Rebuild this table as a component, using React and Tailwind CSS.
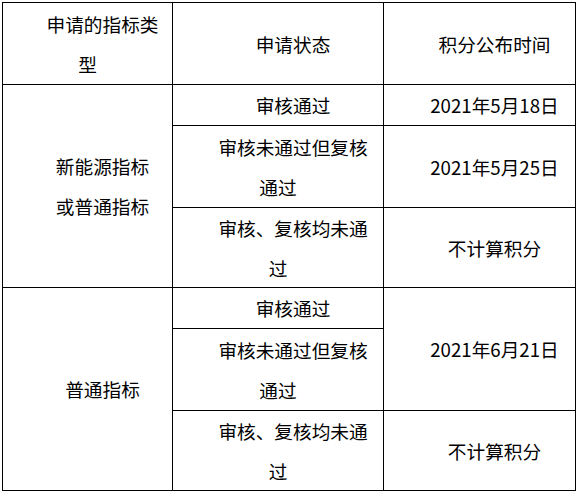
import React from "react";

const font = { fontFamily: '"Noto Sans CJK SC", "Noto Sans", sans-serif' };

function Cell({ lines, className = "", allIndent = false }) {
  return (
    <div
      className={`bg-white flex flex-col items-center justify-center text-black text-[18.67px] leading-[40px] ${className}`}
    >
      {lines.map((l, i) => (
        <div key={i} className={i === 0 || allIndent ? "pl-[30px] whitespace-nowrap" : "whitespace-nowrap"}>
          {l}
        </div>
      ))}
    </div>
  );
}

export default function App() {
  return (
    <div className="w-[580px] h-[493px] bg-white pt-[2px] pl-[2px]" style={font}>
      <div className="inline-grid bg-black p-px gap-px grid-cols-[169px_210px_191px] grid-rows-[81px_40px_81px_79px_40px_81px_79px]">
        <Cell lines={["申请的指标类", "型"]} />
        <Cell lines={["申请状态"]} />
        <Cell lines={["积分公布时间"]} />

        <Cell lines={["新能源指标", "或普通指标"]} allIndent className="row-span-3" />
        <Cell lines={["审核通过"]} />
        <Cell lines={["2021年5月18日"]} />
        <Cell lines={["审核未通过但复核", "通过"]} />
        <Cell lines={["2021年5月25日"]} />
        <Cell lines={["审核、复核均未通", "过"]} />
        <Cell lines={["不计算积分"]} />

        <Cell lines={["普通指标"]} className="row-span-3" />
        <Cell lines={["审核通过"]} />
        <Cell lines={["2021年6月21日"]} className="row-span-2" />
        <Cell lines={["审核未通过但复核", "通过"]} />
        <Cell lines={["审核、复核均未通", "过"]} />
        <Cell lines={["不计算积分"]} />
      </div>
    </div>
  );
}
